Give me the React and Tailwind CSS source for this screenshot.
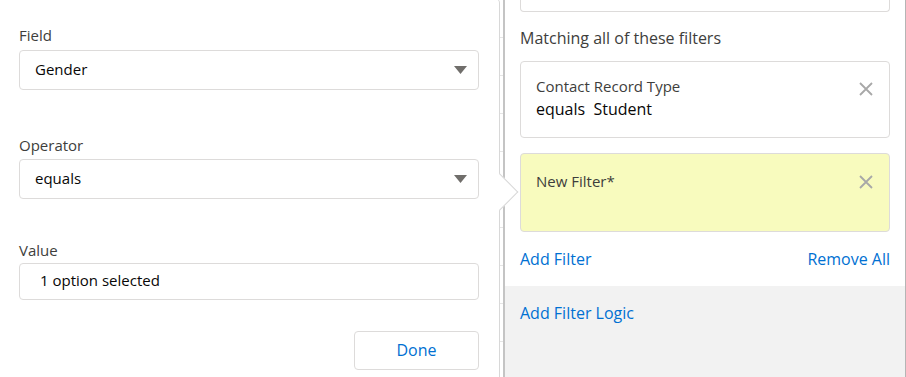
import React from "react";

const font = { fontFamily: '"Open Sans", "Noto Sans", sans-serif' };

const Caret = () => (
  <svg width="13" height="8" viewBox="0 0 13 8" className="shrink-0">
    <path d="M0 0 H13 L6.5 8 Z" fill="#706e6b" />
  </svg>
);

const Close = () => (
  <svg width="14" height="14" viewBox="0 0 14 14" className="shrink-0">
    <path d="M1 1 L13 13 M13 1 L1 13" stroke="#a8a8a8" strokeWidth="1.8" />
  </svg>
);

const Select = ({ value }) => (
  <div className="flex items-center justify-between h-[40px] w-[460px] border border-[#dddbda] rounded-[4px] pl-[15px] pr-[11px] text-[#080707]">
    <span className="pb-[2px]">{value}</span>
    <Caret />
  </div>
);

const Label = ({ children, className = "" }) => (
  <div className={`h-5 leading-5 text-[#3e3e3c] ${className}`}>{children}</div>
);

const FilterCard = ({ title, detail, yellow }) => (
  <div
    className={`flex justify-between rounded-[4px] border border-[#dddbda] pl-[15px] pr-[16px] ${
      yellow ? "bg-[#f8fbbe] h-[79px] pt-[16px]" : "bg-white h-[77px] pt-[13px]"
    }`}
  >
    <div>
      <div className="leading-[22px] text-[#3e3e3c]">{title}</div>
      {detail && (
        <div className="leading-[24px] text-[#080707] text-[16px] whitespace-pre">{detail}</div>
      )}
    </div>
    <div className={yellow ? "pt-[5px]" : "pt-[7px]"}>
      <Close />
    </div>
  </div>
);

export default function App() {
  const ticks = Array.from({ length: 10 });
  return (
    <div
      className="flex w-[906px] h-[377px] overflow-hidden bg-white text-[15px]"
      style={font}
    >
      {/* popover */}
      <div className="relative w-[500px] shrink-0 -mt-[2px] border-t border-r border-[#d8d8d8] rounded-tr-[5px] bg-white pl-[19px] pr-[20px]">
        <Label className="mt-[26px] mb-[5px]">Field</Label>
        <Select value="Gender" />
        <Label className="mt-[45px] mb-[4px]">Operator</Label>
        <Select value="equals" />
        <Label className="mt-[41px] mb-[3px]">Value</Label>
        <div className="flex items-center h-[37px] w-[460px] border border-[#dddbda] rounded-[4px] pl-[20px] pb-[2px] text-[#080707]">
          1 option selected
        </div>
        <div className="flex justify-end mt-[31px]">
          <button className="h-[39px] w-[125px] border border-[#dddbda] rounded-[4px] bg-white pb-[2px] text-[16px] text-[#0070d2]">
            Done
          </button>
        </div>
        <div className="absolute right-[-14px] top-[180px] z-10 w-[26px] h-[26px] rotate-45 bg-white border-t border-r border-[#d8d8d8]" />
      </div>

      {/* table edge behind */}
      <div className="w-[3px] shrink-0 flex flex-col">
        {ticks.map((_, i) => (
          <div key={i} className="h-[38px] shrink-0 border-b border-[#e5e5e5]" />
        ))}
      </div>

      {/* filter panel */}
      <div className="flex-1 flex flex-col border-l-2 border-r border-l-[#c4c4c4] border-r-[#b5b5b5]">
        <div className="px-[15px]">
          <div className="h-[12px] border border-t-0 border-[#dddbda] rounded-b-[4px]" />
          <div className="mt-[16px] mb-[1px] h-5 leading-5 text-[16px] text-[#3e3e3c]">
            Matching all of these filters
          </div>
          <div className="mt-[13px]">
            <FilterCard title="Contact Record Type" detail="equals  Student" />
          </div>
          <div className="mt-[15px]">
            <FilterCard title="New Filter*" yellow />
          </div>
          <div className="mt-[17px] h-5 leading-5 flex justify-between text-[16px] text-[#0070d2]">
            <span>Add Filter</span>
            <span>Remove All</span>
          </div>
        </div>
        <div className="flex-1 mt-[17px] bg-[#f2f2f2] px-[15px] pt-[17px]">
          <div className="h-5 leading-5 text-[16px] text-[#0070d2]">Add Filter Logic</div>
        </div>
      </div>
    </div>
  );
}
